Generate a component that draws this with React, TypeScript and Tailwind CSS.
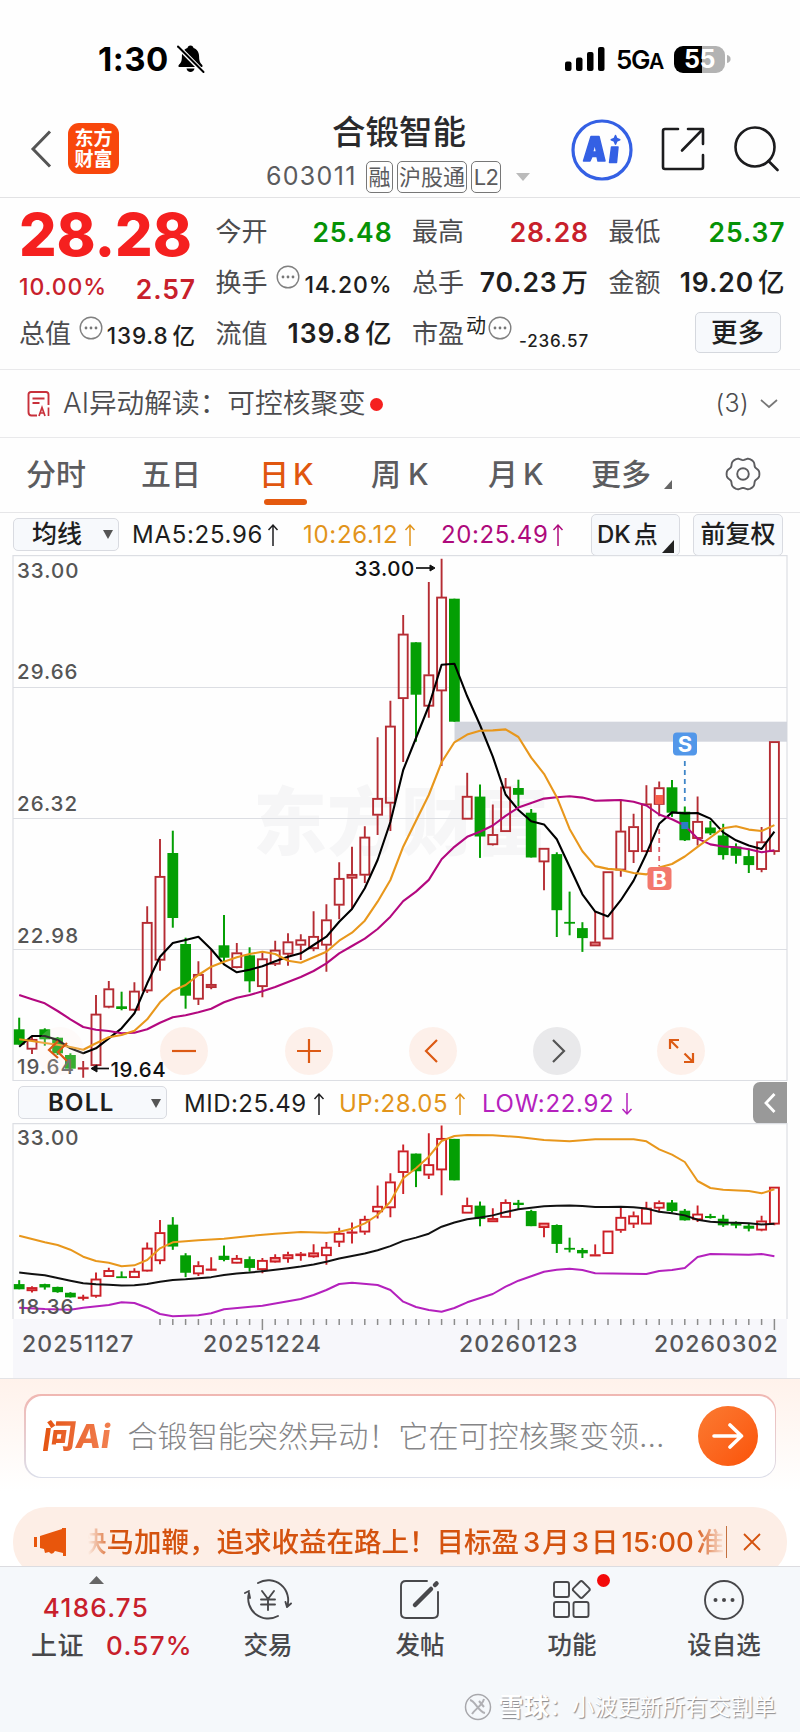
import React from 'react';

type Candle = [string, number, number, number, number];

// direction, high, body top, body bottom, low (chart pixels)
const CANDLES: Candle[] = [
  ['g', 462.7, 474.3, 489.7, 489.7], ['r', 481, 484.3, 494.3, 499], ['g', 473.3, 474.3, 484.3, 490.7],
  ['g', 482, 482.7, 498.3, 500], ['g', 498.3, 500, 513.7, 514.3], ['r', 506, 512.7, 513, 522.7],
  ['r', 440, 459, 510.7, 515], ['r', 426, 433.7, 452.3, 453.3], ['g', 436.7, 451.3, 454, 455.3],
  ['r', 427.3, 436, 455.3, 456], ['r', 351.3, 367.3, 436, 438], ['r', 284, 321.3, 405.3, 415.7],
  ['g', 275.7, 298, 363, 372.7], ['g', 382.7, 389, 440.7, 453.7], ['r', 406.3, 419.3, 444.3, 450],
  ['r', 395, 429.3, 432.7, 434.3], ['g', 360, 390.3, 402.7, 406.7], ['r', 388, 397.7, 412.7, 413.3],
  ['g', 392.3, 400.3, 426.3, 437.3], ['r', 396.7, 403.7, 431.7, 442.3], ['r', 385.7, 395, 409.3, 411],
  ['r', 378.3, 386.7, 399.3, 410.7], ['r', 379.3, 384.7, 390.3, 405], ['r', 356.3, 381.3, 393.7, 396.3],
  ['r', 349.3, 364.7, 390.3, 416.7], ['r', 307.3, 323.3, 350.3, 364.3], ['r', 291.7, 319.3, 323.3, 354],
  ['r', 271.3, 282, 320.3, 328], ['r', 182.3, 243.3, 260.3, 280], ['r', 145.7, 171, 248.3, 276],
  ['r', 60, 79, 143.7, 207], ['g', 87.3, 87.3, 139.7, 186.7], ['r', 27, 119.7, 151.3, 162.7],
  ['r', 3.7, 42, 136, 211], ['g', 43.7, 43.7, 166.7, 166.7], ['r', 217.8, 241.2, 264.3, 264.3],
  ['g', 229.5, 241.6, 281.5, 302.9], ['r', 249.5, 279.4, 289.8, 290.5], ['r', 223, 231.9, 276.7, 276.7],
  ['g', 224.7, 233, 239.8, 251.5], ['g', 254, 257.7, 302.5, 302.5], ['r', 293.2, 293.2, 307, 335.2],
  ['g', 297.3, 299.1, 355.2, 382], ['g', 336.6, 366.9, 367.9, 380.3], ['g', 367.2, 373.1, 383.1, 396.9],
  ['r', 356.6, 386.9, 391, 391], ['r', 316.6, 316.6, 384.1, 384.1], ['r', 245.7, 276, 315.2, 321.8],
  ['r', 258.8, 271.5, 296.7, 308], ['r', 230.2, 248.8, 296.7, 296.7], ['r', 226.4, 232.6, 249.5, 261.2],
  ['g', 225, 232.3, 257.7, 261.9], ['g', 251.5, 256.7, 285.3, 286], ['r', 241.6, 266.3, 283.6, 290.5],
  ['g', 266, 272.5, 278.4, 280.1], ['g', 268.8, 280.5, 300.1, 304.6], ['g', 288.4, 291.5, 300.8, 308.7],
  ['g', 293.6, 301.1, 310.1, 318], ['r', 271.9, 286.7, 314.6, 317.3], ['r', 186.5, 186.5, 296.7, 299.8],
];

const MA5 = [
  491.7, 481, 481, 485, 493.3, 498.3, 493.3, 483.3, 473.3, 458.3, 428.3, 401.7, 388, 385, 381.7, 394.3, 409.3, 417.3, 414.7, 411.3,
  406.3, 401.7, 398.3, 390, 381.7, 366.7, 354, 333.3, 305, 267, 215, 183, 151, 109.7, 108.7, 141.3, 170, 201.6, 239.5, 255,
  266.3, 269.4, 284.3, 311.8, 339.3, 356.6, 361.4, 345.2, 325.6, 298.7, 268.8, 257.4, 258.4, 258, 263.6, 277.4, 285.3, 290.5, 293.9, 276.7,
];
const MA10 = [
  484.3, 486, 488, 489.7, 492, 494.7, 488.3, 482.3, 480, 475.7, 464.3, 447.3, 435.7, 430, 420, 411.7, 406.7, 402.3, 399, 396.7,
  399, 405.7, 407.7, 402.3, 396.7, 385.7, 377.7, 365.7, 346.7, 325, 291.7, 265.7, 240, 207.3, 187.3, 179.6, 175.8, 175.4, 174.4, 182,
  202.6, 218.8, 242.2, 273.9, 296.3, 311.1, 313.9, 314.9, 318, 319.4, 312.5, 309, 301.5, 291.8, 282.5, 273.2, 271.2, 274.6, 276, 270.1,
];
const MA20 = [
  440, 444.3, 448.3, 456, 464.3, 472, 474.7, 476, 478.3, 477.7, 474.3, 467.7, 462.3, 460.3, 457.3, 453.7, 447.3, 442.7, 440, 436.3,
  432, 427, 422, 416, 408.3, 398.3, 391, 383.7, 374, 361.7, 346.2, 336.6, 324.9, 304.2, 291.8, 281.8, 276.7, 270.5, 260.8, 252.6,
  248.1, 243.6, 242.2, 241.2, 242.6, 245.7, 245.4, 245, 246.7, 250.5, 259.5, 264.3, 270.5, 283.6, 289.4, 291.5, 292.2, 294.2, 297.3, 295.3,
];
const BOLL_UP: [number, number][] = [
  [0, 112.7], [2, 119.3], [3, 122], [4, 126.7], [5, 133.7], [6, 138], [7, 139.7], [8, 143.3], [9, 142.3], [10, 137], [11, 125.3],
  [12, 119.3], [14, 117.3], [16, 115.7], [18, 113], [20, 110.7], [22, 109], [24, 109.7], [25, 108.7], [26, 105.7], [27, 100.3],
  [28, 92], [29, 78.7], [30, 55.3], [31, 45.3], [32, 33.7], [33, 18], [34, 13], [35, 12], [37, 12.3], [39, 14], [41, 17], [43, 18.3],
  [45, 16.3], [48, 16.3], [49, 18.3], [50, 26.3], [51, 31.7], [52, 39], [53, 58], [54, 65], [55, 66.7], [57, 68], [58, 70.3], [59, 66.3],
];
const BOLL_LOW: [number, number][] = [
  [0, 184.7], [2, 186], [4, 186.7], [5, 184.7], [7, 182], [8, 179.3], [9, 180], [10, 184.7], [11, 191], [12, 193.3], [14, 192.3],
  [15, 190.3], [16, 186.3], [19, 182.7], [21, 178.3], [22, 176], [23, 172], [24, 167], [25, 161], [26, 159.7], [28, 162], [29, 167],
  [30, 178.7], [31, 184], [32, 187], [33, 188.7], [34, 185], [35, 179.3], [37, 171], [38, 163.7], [39, 157.7], [41, 148.7], [42, 146.7],
  [43, 145.7], [44, 147], [45, 150.3], [49, 151], [50, 148], [51, 147], [52, 145], [53, 134], [54, 131], [57, 131.7], [58, 131], [59, 133.3],
];

const xAt = (i: number) => 19.2 + i * 12.8;
const bollY = (y: number) => 1.15 + y * 0.3372;
const line = (ys: number[]) => ys.map((y, i) => `${xAt(i)},${y}`).join(' ');
const pairs = (pts: [number, number][]) => pts.map(([i, y]) => `${xAt(i)},${y}`).join(' ');

// six-lobed outline of the settings icon
const GEAR = Array.from({ length: 72 }, (_, n) => {
  const a = (n * Math.PI) / 36;
  const r = 15.4 + 1.3 * Math.cos(6 * a) - 0.3 * Math.cos(12 * a);
  return `${(18 + r * Math.cos(a)).toFixed(1)},${(18 + r * Math.sin(a)).toFixed(1)}`;
}).join(' ');

const Candles: React.FC<{ scale?: (y: number) => number; red: string }> = ({ scale = (y) => y, red }) => (
  <g>
    {CANDLES.map(([dir, high, top, bottom, low], i) => {
      const x = xAt(i);
      const [h, t, b, l] = [high, top, bottom, low].map(scale);
      if (dir === 'g') {
        return (
          <g key={i} fill="#049f04">
            <rect x={x - 1} y={h} width={2} height={l - h} />
            <rect x={x - 5.4} y={t} width={10.8} height={Math.max(b - t, 1.8)} />
          </g>
        );
      }
      return (
        <g key={i} stroke={red} strokeWidth={1.9} fill="none">
          <path d={`M${x} ${h}V${t}M${x} ${b}V${l}`} />
          <rect x={x - 4.5} y={t + 0.6} width={9} height={Math.max(b - t - 1.2, 0.3)} fill={b - t < 5 ? '#f9a0a0' : 'none'} />
        </g>
      );
    })}
  </g>
);

const Dots = () => (
  <svg viewBox="0 0 24 24" className="size-6 shrink-0" fill="none" stroke="#808080" strokeWidth="1.400">
    <circle cx="12" cy="12" r="10.800" />
    <g fill="#777" stroke="none">
      <circle cx="7" cy="12" r="1.400" /><circle cx="12" cy="12" r="1.400" /><circle cx="17" cy="12" r="1.400" />
    </g>
  </svg>
);

const StatusBar = () => (
  <div className="flex h-24 items-start justify-between pt-[45px] pr-[69px] pl-[98px]">
    <div className="flex h-7 items-center gap-[7px]">
      <span className="text-[33px] leading-7 font-bold tracking-[0.5px] text-black">1:30</span>
      <svg viewBox="0 0 30 30" className="size-[30px]">
        <path d="M14.500 1.500c1.800 0 2.800 1 3 2.500 3.800 1.300 5.600 4.500 5.600 8.500 0 5.500 1.700 6.800 3.100 8.400.8 1 .3 2.100-1 2.100H3.800c-1.300 0-1.800-1.100-1-2.100C4.300 19.300 5.900 18 5.900 12.500c0-4 1.800-7.200 5.600-8.500.2-1.500 1.200-2.500 3-2.500zM10.500 24.500h8c-.4 2.200-2 3.500-4 3.500s-3.600-1.300-4-3.500z" />
        <path d="M1.500 2l25.500 26" stroke="#fff" strokeWidth="4.500" />
        <path d="M2 2.500l25.500 25.500" stroke="#000" strokeWidth="2" strokeLinecap="round" />
      </svg>
    </div>
    <div className="flex h-7 items-center">
      <svg viewBox="0 0 40 26" className="h-[26px] w-10">
        <rect x="0" y="15.500" width="6.500" height="9.500" rx="2" />
        <rect x="11" y="11.500" width="6.500" height="13.500" rx="2" />
        <rect x="22" y="6" width="6.500" height="19" rx="2" />
        <rect x="33" y="1" width="6.500" height="24" rx="2" />
      </svg>
      <span className="ml-[11px] w-[47px] text-[26px] font-semibold tracking-[-1.400px] text-black">5G<span className="text-[21px]">A</span></span>
      <div className="ml-[11px] flex h-[27px] w-[51px] items-center justify-center rounded-[9px] bg-linear-to-r from-black from-55% to-[#b3b3b3] to-55%">
        <span className="text-[25px] leading-none font-bold tracking-[-0.500px] text-white">55</span>
      </div>
      <svg viewBox="0 0 5 10" className="ml-0.5 h-2.5 w-1"><path d="M0 0c3 .5 4.500 2.500 4.500 5S3 9.500 0 10z" fill="#b3b3b3" /></svg>
    </div>
  </div>
);

const Header = () => (
  <header className="flex h-[102px] items-center border-b border-[#e2e2e4] pr-5 pl-[30px]">
    <svg viewBox="0 0 22 38" className="mt-1 h-[38px] w-[22px]" fill="none" stroke="#555" strokeWidth="3">
      <path d="M20 1.500L3 19l17 17.500" />
    </svg>
    <div className="mt-1 ml-4 grid h-[51px] w-[51px] place-content-center rounded-[11px] bg-[#f8470c] text-center text-[19px] leading-[21px] font-bold text-white">
      <div>东方</div>
      <div>财富</div>
    </div>
    <div className="ml-[147px] flex w-[278px] flex-col pt-4">
      <div className="pl-[66px] text-[33.500px] leading-[44px] font-medium text-[#2a2a2c]">合锻智能</div>
      <div className="flex h-[46px] items-center text-[#5b5b5d]">
        <span className="w-[100px] text-[25px] tracking-[1.300px]">603011</span>
        <span className="mr-1 w-[27px] rounded-[5px] border border-[#777] text-center text-[22px] leading-[30px]">融</span>
        <span className="mr-1 w-[70px] rounded-[5px] border border-[#777] text-center text-[22px] leading-[30px]">沪股通</span>
        <span className="w-[30px] rounded-[5px] border border-[#777] text-center text-[22px] leading-[30px] tracking-[-0.800px]">L2</span>
        <svg viewBox="0 0 14 8" className="ml-[15px] h-2 w-3.5 shrink-0"><path d="M0 0h14L7 8z" fill="#bbb" /></svg>
      </div>
    </div>
    <svg viewBox="0 0 62 62" className="mt-1.5 ml-[27px] size-[62px] shrink-0">
      <circle cx="31" cy="31" r="29" fill="none" stroke="#3460e4" strokeWidth="3.200" />
      <g fill="#3460e4" stroke="#3460e4" strokeWidth="1.500" strokeLinejoin="round">
        <path fillRule="evenodd" d="M20 17.500h8l6 24.500h-7l-1-4.500h-5l-2 4.500h-6.500zM24 24.500l-2.500 8.500h4z" />
        <path d="M40.500 28h6.500l-1.500 15.500h-7z" />
        <path d="M44.500 16.500l1.300 3 3 1.300-3 1.300-1.300 3-1.300-3-3-1.300 3-1.300z" />
      </g>
    </svg>
    <svg viewBox="0 0 44 44" className="mt-1 ml-[28px] size-11 shrink-0" fill="none" stroke="#1c1c1e" strokeWidth="2.600" strokeLinecap="round" strokeLinejoin="round">
      <path d="M17 2H4Q2 2 2 4v36q0 2 2 2h36q2 0 2-2V28M27 2h15v15M41.500 2.500L21 23.500" />
    </svg>
    <svg viewBox="0 0 46 46" className="mt-1 ml-[28px] size-[46px] shrink-0" fill="none" stroke="#1c1c1e" strokeWidth="2.600" strokeLinecap="round">
      <circle cx="22" cy="21" r="19.500" /><path d="M35.500 35l9 9" />
    </svg>
  </header>
);

const label = 'text-[26px] font-normal tracking-normal text-[#4c4c4f]';

const Quotes = () => (
  <section className="grid h-[172px] grid-cols-[177px_177px_177px_177px] grid-rows-[48px_51px_51px] gap-x-[19.500px] border-b border-[#e9e9eb] pt-[10px] pl-[19px] text-[26.500px] leading-none font-semibold tracking-[0.900px] whitespace-nowrap text-[#1e1e20]">
    <div className="flex items-center pt-[5px] text-[59px] font-extrabold tracking-[-0.100px] text-[#f5201f]">28.28</div>
    <div className="flex items-center justify-between"><span className={label}>今开</span><span className="text-[#069206]">25.48</span></div>
    <div className="flex items-center justify-between"><span className={label}>最高</span><span className="text-[#c8202b]">28.28</span></div>
    <div className="flex items-center justify-between"><span className={label}>最低</span><span className="text-[#069206]">25.37</span></div>

    <div className="flex items-center justify-between pt-3 font-medium text-[#c8202b]"><span className="text-[23px]">10.00%</span><span className="pt-1 font-semibold">2.57</span></div>
    <div className="flex items-center pt-0.5"><span className={label}>换手</span><span className="-mt-3 ml-2"><Dots /></span><span className="ml-auto pt-1.5 text-[23px] font-medium">14.20%</span></div>
    <div className="flex items-center justify-between pt-0.5"><span className={label}>总手</span><span>70.23<span className="ml-1 font-medium">万</span></span></div>
    <div className="flex items-center justify-between pt-0.5"><span className={label}>金额</span><span>19.20<span className="ml-1 font-medium">亿</span></span></div>

    <div className="flex items-center pt-0.5"><span className={label}>总值</span><span className="-mt-3 ml-2"><Dots /></span><span className="ml-auto pt-1.5 text-[22.500px] font-medium">139.8<span className="ml-1">亿</span></span></div>
    <div className="flex items-center justify-between pt-0.5"><span className={label}>流值</span><span>139.8<span className="ml-1 font-medium">亿</span></span></div>
    <div className="flex items-center pt-0.5"><span className={label}>市盈</span><span className="-mt-4 ml-0.5 text-[20px] font-normal tracking-normal">动</span><span className="-mt-3 ml-0.5"><Dots /></span><span className="ml-auto pt-4 text-[17px] font-medium tracking-[0.900px]">-236.57</span></div>
    <div className="flex items-center justify-end pr-[5px]"><span className="grid h-[41px] w-[86px] place-content-center rounded-[5px] border border-[#d5d8de] bg-[#f7f9fc] font-medium tracking-normal">更多</span></div>
  </section>
);

const AiRow = () => (
  <section className="flex h-[68px] items-center border-b border-[#e9e9eb] pt-px pr-[22px] pl-[27px] text-[27.700px] text-[#4c4c4f]">
    <svg viewBox="0 0 24 26" className="h-[26px] w-6" fill="none" stroke="#c8303a" strokeWidth="1.900">
      <path d="M21.500 14V3.500q0-2.500-2.500-2.500H4Q1.500 1 1.500 3.500V21q0 3.500 3 3.500H10M5.500 7.500h12M5.500 12h7" />
      <path d="M12 25l3-8.500L18 25M13 22h4M21.500 16.500V25" strokeWidth="1.700" />
    </svg>
    <span className="ml-3 font-[350]">AI异动解读：可控核聚变</span>
    <span className="ml-1 size-[13px] rounded-full bg-[#f5201f]" />
    <span className="ml-auto text-[25px] font-[350] tracking-[0.300px]">(3)</span>
    <svg viewBox="0 0 18 10" className="ml-[11px] h-2.5 w-[18px]" fill="none" stroke="#777" strokeWidth="1.700"><path d="M1 1l8 7 8-7" /></svg>
  </section>
);

const Tabs = () => (
  <nav className="flex h-[75px] items-center border-b border-[#e6e6e8] pb-0.5 pl-[26px] text-[30px] leading-[38px] font-medium text-[#5c5c5f]">
    <span className="w-[115px]">分时</span>
    <span className="w-[118px]">五日</span>
    <span className="relative w-[112px] text-[#e0560f]">日<span className="ml-1">K</span>
      <i className="absolute -bottom-3 left-[5px] h-1.5 w-[43px] rounded-full bg-[#e4590f]" />
    </span>
    <span className="w-[117px]">周<span className="ml-[7px]">K</span></span>
    <span className="w-[103px]">月<span className="ml-[5px]">K</span></span>
    <span>更多</span>
    <svg viewBox="0 0 8 9" className="mt-5 ml-[13px] h-[9px] w-2"><path d="M8 0v9H0z" fill="#666" /></svg>
    <svg viewBox="0 0 36 36" className="ml-[53px] size-9" fill="none" stroke="#5c5c5f" strokeWidth="1.900" strokeLinejoin="round">
      <polygon points={GEAR} />
      <circle cx="18" cy="18" r="5.800" />
    </svg>
  </nav>
);

const Caret = () => <svg viewBox="0 0 10 9" className="h-[9px] w-2.5"><path d="M0 0h10L5 9z" fill="#555" /></svg>;

const Arrow: React.FC<{ down?: boolean }> = ({ down }) => (
  <svg viewBox="0 0 12 24" className="h-6 w-3 shrink-0" fill="none" stroke="currentColor" strokeWidth="1.500">
    <path d={down ? 'M6 1v21M1.500 17L6 22l4.500-5' : 'M6 23V2M1.500 7L6 2l4.500 5'} />
  </svg>
);

const box = 'flex items-center rounded-[5px] border border-[#d9dbe1] bg-[#f7f9fc] font-medium tracking-normal text-[#1e1e20]';

const MainChart = () => (
  <section>
    <div className="flex h-[42px] items-center pt-px pl-[13px] text-[24px] tracking-[0.700px] whitespace-nowrap">
      <div className={`${box} h-[33px] w-[106px] justify-between pr-[5px] pl-[18px] text-[25px]`}>均线<Caret /></div>
      <div className="flex w-[172px] items-center gap-1 pl-[13px] text-[#1e1e20]">MA5:25.96<Arrow /></div>
      <div className="flex w-[137px] items-center gap-1.5 pl-3 text-[#e2941a]">10:26.12<Arrow /></div>
      <div className="flex w-[163px] items-center gap-1 pl-[13px] tracking-[0.600px] text-[#ae0a7c]">20:25.49<Arrow /></div>
      <div className={`${box} relative h-[42px] w-[89px] pl-[5px]`}>
        DK<span className="ml-[3px]">点</span>
        <svg viewBox="0 0 12 13" className="absolute right-[5px] bottom-0.5 h-[13px] w-3"><path d="M12 0v13H0z" fill="#222" /></svg>
      </div>
      <div className={`${box} ml-[13px] h-[42px] w-[90px] justify-center text-[25px]`}>前复权</div>
    </div>
    <div className="relative h-[526px]">
      <svg viewBox="0 0 800 526" width="800" height="526" className="block">
        <text x="253" y="294" fontSize="74" fontWeight="900" fill="#f6f6f7">东方财富</text>
        <g stroke="#dcdee3" strokeWidth="1.200" fill="none">
          <path d="M13 132.500H787M13 263.500H787M13 394.500H787" />
          <rect x="13" y="0.600" width="774" height="525" />
        </g>
        <rect x="454.500" y="166.700" width="332.500" height="20" fill="#d2d5dd" />
        <Candles red="#b52c33" />
        <rect x={xAt(50) - 4} y="240" width="8" height="9" fill="#f8604c" />
        <g fill="none" strokeWidth="2.100" strokeLinejoin="round">
          <polyline points={line(MA5)} stroke="#000" />
          <polyline points={line(MA20)} stroke="#b3087f" />
          <polyline points={line(MA10)} stroke="#e8971c" />
        </g>
        <rect x={xAt(52) - 3.5} y="267" width="7" height="7" fill="#2b7fc4" />
        <path d="M659.200 274v37" stroke="#e0606a" strokeWidth="1.800" strokeDasharray="5 4" />
        <path d="M684.800 206v40" stroke="#3f86c8" strokeWidth="1.800" strokeDasharray="5 4" />
        <g fontSize="22" fontWeight="700" fill="#fff" textAnchor="middle">
          <rect x="647.500" y="312" width="24" height="23" rx="4" fill="#f3786c" />
          <text x="659.500" y="331.500">B</text>
          <rect x="673" y="177.500" width="24" height="23" rx="4" fill="#5297e9" />
          <text x="685" y="197">S</text>
        </g>
        <g fontSize="20.500" fontWeight="500" fill="#555" letterSpacing="1">
          <text x="17" y="23">33.00</text>
          <text x="17" y="124">29.66</text>
          <text x="17" y="256">26.32</text>
          <text x="17" y="387.500">22.98</text>
          <text x="17" y="519">19.64</text>
        </g>
        <g fontSize="20.500" fontWeight="500" fill="#111" letterSpacing="0.600">
          <text x="354.500" y="21">33.00</text>
          <text x="110.500" y="521.500">19.64</text>
        </g>
        <g stroke="#111" strokeWidth="1.700" fill="#111">
          <path d="M416 13h16" /><path d="M430 10l5 3-5 3z" strokeWidth="1" />
          <path d="M94 513.500h15" /><path d="M97 510l-6 3.500 6 3.500z" strokeWidth="1" />
        </g>
      </svg>
      <div className="absolute bottom-[6px] left-[36px] flex gap-[76.300px] text-[#dc5a14]">
        {['M22 14l-9 9 9 8M31 16l-9 9 9 9', 'M12 24h24', 'M12 24h24M24 12v24', 'M28 13L17 24l11 11', 'M20 13l11 11-11 11', 'M13 22v-9h9M13 13l8 8M36 26v9h-9M36 35l-8.500-8.500'].map((d, i) => (
          <span key={i} className={`size-12 rounded-full ${i === 4 ? 'bg-[#e9e9eb] text-[#555]' : i === 0 ? 'bg-[#fdece5]/20' : 'bg-[#fdece5]/80'}`}>
            <svg viewBox="0 0 48 48" className="size-12" fill="none" stroke="currentColor" strokeWidth="2.200"><path d={d} /></svg>
          </span>
        ))}
      </div>
    </div>
  </section>
);

const TICKS = Array.from({ length: 49 }, (_, n) => n + 11);

const BollChart = () => (
  <section>
    <div className="flex h-[42px] items-center pt-px pl-[18px] text-[24px] tracking-[0.500px] whitespace-nowrap">
      <div className="flex h-[33px] w-[149px] items-center justify-between rounded-[5px] border border-[#d9dbe1] bg-[#f7f9fc] pt-px pr-[5px] pl-[29px] text-[24px] font-semibold tracking-[1.300px] text-[#1e1e20]">BOLL<Caret /></div>
      <div className="flex w-[172px] items-center gap-1.5 pt-[3px] pl-[17px] text-[#1e1e20]">MID:25.49<Arrow /></div>
      <div className="flex w-[143px] items-center gap-1.5 pt-[3px] text-[#e2941a]">UP:28.05<Arrow /></div>
      <div className="flex items-center gap-[7px] pt-[3px] tracking-[0.700px] text-[#b421bd]">LOW:22.92<Arrow down /></div>
      <div className="mr-[13px] ml-auto grid h-[42px] w-[34px] place-content-center rounded-l-[7px] bg-[#999]">
        <svg viewBox="0 0 12 20" className="h-5 w-3" fill="none" stroke="#fff" strokeWidth="2.800"><path d="M10.500 1L2 10l8.500 9" /></svg>
      </div>
    </div>
    <svg viewBox="0 0 800 196" width="800" height="196" className="block">
      <path d="M13 196V.6H787V196" fill="none" stroke="#dcdee3" strokeWidth="1.200" />
      <Candles scale={bollY} red="#cc1f26" />
      <g fill="none" strokeWidth="2" strokeLinejoin="round">
        <polyline points={line(MA20.map(bollY))} stroke="#111" />
        <polyline points={pairs(BOLL_UP)} stroke="#e8971c" />
        <polyline points={pairs(BOLL_LOW)} stroke="#b421bd" />
      </g>
      <g fontSize="20.500" fontWeight="500" fill="#555" letterSpacing="1">
        <text x="17" y="21.500">33.00</text>
        <text x="17" y="191">18.36</text>
      </g>
    </svg>
    <div className="mx-[13px] h-[59px] bg-[#f7f7fb]">
      <svg viewBox="13 0 774 12" width="774" height="12" className="block" stroke="#8c8c8c" strokeWidth="1.500">
        {TICKS.map((i) => <path key={i} d={`M${xAt(i)} 0V${i % 20 === 19 ? 11 : 6}`} />)}
      </svg>
      <div className="-mt-px flex pl-[9px] text-[23px] leading-7 font-medium tracking-[1.100px] text-[#555558]">
        <span className="w-[181px]">20251127</span>
        <span className="w-[256px]">20251224</span>
        <span className="w-[195px]">20260123</span>
        <span>20260302</span>
      </div>
    </div>
  </section>
);

const AskAi = () => (
  <section className="h-[188px] overflow-hidden border-t border-[#e3e3e6] bg-linear-to-b from-[#fff2eb] to-white to-60% px-6 pt-[15px]">
    <div className="rounded-[17px] bg-linear-to-b from-[#f0b7b2] to-[#dcdfea] p-[1.500px]">
      <div className="flex h-[81px] items-center rounded-[16px] bg-white pl-[17px]">
        <span className="w-[85px] skew-x-[-8deg] bg-linear-to-r from-[#e4530c] to-[#f58a5c] bg-clip-text text-[33px] leading-10 font-extrabold text-transparent">问Ai</span>
        <span className="w-[550px] pt-0.5 text-[30.100px] font-light whitespace-nowrap text-[#858587]">合锻智能突然异动！它在可控核聚变领...</span>
        <span className="ml-[20px] grid size-[60px] shrink-0 place-content-center rounded-full bg-linear-to-br from-[#fb7a30] to-[#fb5203]">
          <svg viewBox="0 0 32 26" className="h-[26px] w-8" fill="none" stroke="#fff" strokeWidth="3.600" strokeLinecap="round" strokeLinejoin="round">
            <path d="M2 13h27M18 2l11.500 11L18 24" />
          </svg>
        </span>
      </div>
    </div>
    <div className="-mx-[11px] mt-[29px] flex h-[70px] items-center rounded-[34px] bg-[#fdeee6] pr-[26px] pl-[21px] text-[#d4520e]">
      <svg viewBox="0 0 32 28" className="h-7 w-8" fill="#e8560c">
        <path d="M0 9h3v10H0zM6 8l22-7V0h4v28h-3v-3l-8-2q-3 5-6 1l-4 1-1-4-4-1z" />
      </svg>
      <div className="ml-[22px] flex h-9 w-[638px] overflow-hidden mask-r-from-95% mask-l-from-96% text-[27.500px] leading-9 font-medium whitespace-nowrap">
        <span className="-ml-[9px]">快马加鞭，追求收益在路上！目标盈<span className="ml-1 mr-0.5">3</span>月<span className="mx-0.5">3</span>日<span className="mx-[3px]">15:00</span>准</span>
      </div>
      <i className="h-8 w-[1.500px] bg-[#c4713f]" />
      <svg viewBox="0 0 18 18" className="ml-4 size-[18px]" stroke="#d4520e" strokeWidth="1.800"><path d="M1 1l16 16M17 1L1 17" /></svg>
    </div>
  </section>
);

const NavItem: React.FC<{ name: string; children: React.ReactNode }> = ({ name, children }) => (
  <div className="flex w-[152px] flex-col items-center">
    <svg viewBox="0 0 46 46" className="mt-px size-[46px] overflow-visible" fill="none" stroke="#48484b" strokeWidth="1.900" strokeLinecap="round" strokeLinejoin="round">{children}</svg>
    <span className="mt-[6px] text-[24.500px] leading-8 font-medium text-[#48484b]">{name}</span>
  </div>
);

const BottomBar = () => (
  <footer className="h-[166px] border-t border-[#dcdce0] bg-[#f5f8fb]">
    <div className="flex h-[134px] pt-[9px]">
      <div className="flex w-48 flex-col items-center font-medium tracking-[1.300px] whitespace-nowrap text-[#c8202b]">
        <svg viewBox="0 0 15 8" className="h-2 w-[15px]"><path d="M0 8l7.500-8L15 8z" fill="#666" /></svg>
        <span className="mt-[6px] text-[26px] leading-9">4186.75</span>
        <span className="mt-0.5 flex w-full items-center pl-[31px] text-[26px] leading-9"><span className="mr-[22px] tracking-[0.500px] text-[#48484b]">上证</span>0.57%</span>
      </div>
      <NavItem name="交易">
        <path d="M13 6a20 20 0 0 1 29 24l-1.500-5M42 30l4-3.500M33 39A20 20 0 0 1 4 16l1 5M4 14l-4 2" />
        <path d="M17 14l6 8 6-8M23 22v11M16 22.500h14M16 27.500h14" />
      </NavItem>
      <NavItem name="发帖">
        <path d="M30 4H9Q4 4 4 9v27q0 5 5 5h27q5 0 5-5V15" />
        <path d="M18 28L34 12M38 8l1.500-1.500" strokeWidth="4.500" />
      </NavItem>
      <NavItem name="功能">
        <rect x="5" y="5" width="15" height="15" rx="2" /><rect x="5" y="25" width="15" height="15" rx="2" /><rect x="24.500" y="25" width="15" height="15" rx="2" />
        <rect x="25.800" y="6" width="13" height="13" rx="2" transform="rotate(45 32.300 12.500)" />
        <circle cx="54.500" cy="3.500" r="6.500" fill="#f30a0a" stroke="none" />
      </NavItem>
      <NavItem name="设自选">
        <circle cx="23" cy="23" r="19" />
        <g fill="#48484b" stroke="none"><circle cx="14.500" cy="23" r="2" /><circle cx="23" cy="23" r="2" /><circle cx="31.500" cy="23" r="2" /></g>
      </NavItem>
    </div>
    <div className="-mt-2 flex items-center justify-end pr-6 text-[22.700px] leading-7 text-white [text-shadow:1px_1px_1px_#8a8a8e]">
      <svg viewBox="0 0 28 28" className="mr-1.5 size-7" fill="none">
        <circle cx="14" cy="14" r="12.500" stroke="#a8a8ac" strokeWidth="1.500" />
        <path d="M6 7c5 1 9 12 15 13M20 6c-2 7-8 9-12 15M15 8l5 6" stroke="#b0b0b4" strokeWidth="2" />
      </svg>
      <span className="text-[25.500px] font-bold">雪球</span>：小波更新所有交割单
    </div>
  </footer>
);

export default function App() {
  return (
    <div className="h-[1732px] w-[800px] overflow-hidden bg-[#fefefe] font-['Inter','Noto_Sans_CJK_SC',sans-serif]">
      <StatusBar />
      <Header />
      <Quotes />
      <AiRow />
      <Tabs />
      <MainChart />
      <BollChart />
      <AskAi />
      <BottomBar />
    </div>
  );
}
